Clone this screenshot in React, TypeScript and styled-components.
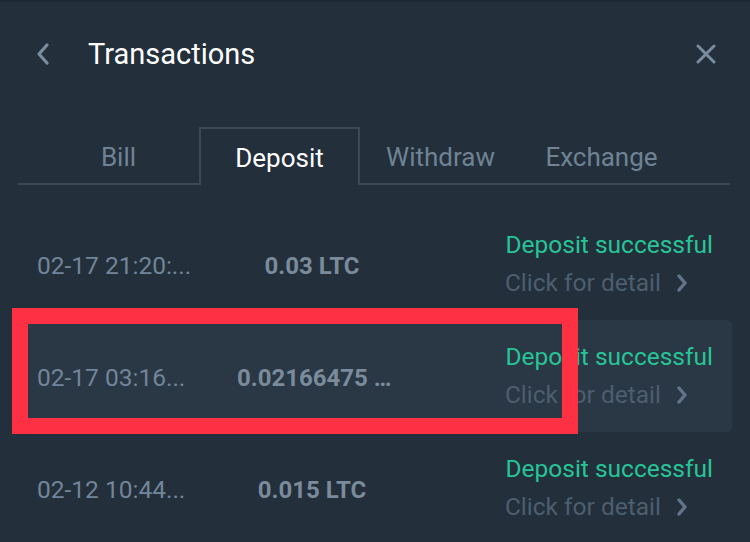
import React from "react";
import styled, { createGlobalStyle } from "styled-components";

const Global = createGlobalStyle`
  html, body { margin: 0; padding: 0; background: #232f3b; }
  body { font-family: Roboto, "Noto Sans", "Liberation Sans", sans-serif; }
  * { box-sizing: border-box; }
`;

const Screen = styled.div`
  position: relative;
  width: 750px;
  height: 542px;
  overflow: hidden;
  background: #232f3b;
  border-top: 2px solid #1d2731;
`;

const Header = styled.div`
  height: 102px;
  display: flex;
  align-items: center;
  padding: 2px 34px 0 34px;
`;

const IconButton = styled.button`
  border: 0;
  background: none;
  padding: 0;
  display: flex;
  align-items: center;
  justify-content: center;
  color: #7a8d9e;
  cursor: pointer;
`;

const Title = styled.h1`
  margin: 0 0 0 36px;
  flex: 1;
  font-size: 29px;
  font-weight: 400;
  color: #ffffff;
`;

const Tabs = styled.div`
  margin: 23px 20px 0 18px;
  display: flex;
  padding-left: 20px;
  border-bottom: 2px solid #3c4a57;
  height: 58px;
`;

const Tab = styled.div<{ $active?: boolean }>`
  width: 161px;
  display: flex;
  align-items: center;
  justify-content: center;
  padding-top: 2px;
  font-size: 26px;
  color: ${(p) => (p.$active ? "#ffffff" : "#6f8394")};
  border: 2px solid ${(p) => (p.$active ? "#3c4a57" : "transparent")};
  border-bottom: 0;
  background: ${(p) => (p.$active ? "#232f3b" : "transparent")};
  margin-bottom: ${(p) => (p.$active ? "-2px" : "0")};
  height: ${(p) => (p.$active ? "58px" : "56px")};
`;

const List = styled.div`
  margin-top: 23px;
  padding: 0 18px 0 12px;
`;

const Row = styled.div<{ $highlight?: boolean }>`
  height: 112px;
  display: grid;
  grid-template-columns: 200px 150px 1fr;
  align-items: center;
  padding: 0 19px 0 25px;
  border-radius: 5px;
  background: ${(p) => (p.$highlight ? "#2a3744" : "transparent")};
`;

const DateText = styled.div`
  font-size: 24.5px;
  color: #72859a;
  white-space: nowrap;
  padding-top: 3px;
`;

const Amount = styled.div`
  font-size: 24px;
  font-weight: 700;
  color: #7a8b9b;
  text-align: center;
  white-space: nowrap;
  padding-top: 3px;
`;

const Status = styled.div`
  display: flex;
  flex-direction: column;
  align-items: flex-end;
  gap: 8px;
`;

const Success = styled.div`
  font-size: 24.5px;
  line-height: 30px;
  color: #27c497;
  white-space: nowrap;
`;

const Detail = styled.div`
  display: flex;
  align-items: center;
  gap: 15px;
  font-size: 24.5px;
  line-height: 30px;
  color: #4d5e6e;
  white-space: nowrap;
  padding-right: 25px;
  svg { color: #61748a; }
`;

const Annotation = styled.div`
  position: absolute;
  left: 12px;
  top: 306px;
  width: 566px;
  height: 126px;
  border: 16px solid #fe3044;
  pointer-events: none;
`;

const Back = () => (
  <svg width="18" height="24" viewBox="0 0 18 24">
    <path d="M13 3 L5 12 L13 21" fill="none" stroke="currentColor" strokeWidth="3.2" strokeLinecap="round" strokeLinejoin="round" />
  </svg>
);

const Close = () => (
  <svg width="20" height="20" viewBox="0 0 20 20">
    <path d="M2 2 L18 18 M18 2 L2 18" fill="none" stroke="currentColor" strokeWidth="3" strokeLinecap="round" />
  </svg>
);

const Chevron = () => (
  <svg width="12" height="18" viewBox="0 0 12 18">
    <path d="M3 2 L9 9 L3 16" fill="none" stroke="currentColor" strokeWidth="3.4" strokeLinecap="round" strokeLinejoin="round" />
  </svg>
);

const rows = [
  { date: "02-17 21:20:...", amount: "0.03 LTC" },
  { date: "02-17 03:16...", amount: "0.02166475 …", highlight: true },
  { date: "02-12 10:44...", amount: "0.015 LTC" },
];

export default function App() {
  return (
    <Screen>
      <Global />
      <Header>
        <IconButton aria-label="Back"><Back /></IconButton>
        <Title>Transactions</Title>
        <IconButton aria-label="Close"><Close /></IconButton>
      </Header>
      <Tabs>
        <Tab>Bill</Tab>
        <Tab $active>Deposit</Tab>
        <Tab>Withdraw</Tab>
        <Tab>Exchange</Tab>
      </Tabs>
      <List>
        {rows.map((r) => (
          <Row key={r.date} $highlight={r.highlight}>
            <DateText>{r.date}</DateText>
            <Amount>{r.amount}</Amount>
            <Status>
              <Success>Deposit successful</Success>
              <Detail>
                Click for detail
                <Chevron />
              </Detail>
            </Status>
          </Row>
        ))}
      </List>
      <Annotation />
    </Screen>
  );
}
